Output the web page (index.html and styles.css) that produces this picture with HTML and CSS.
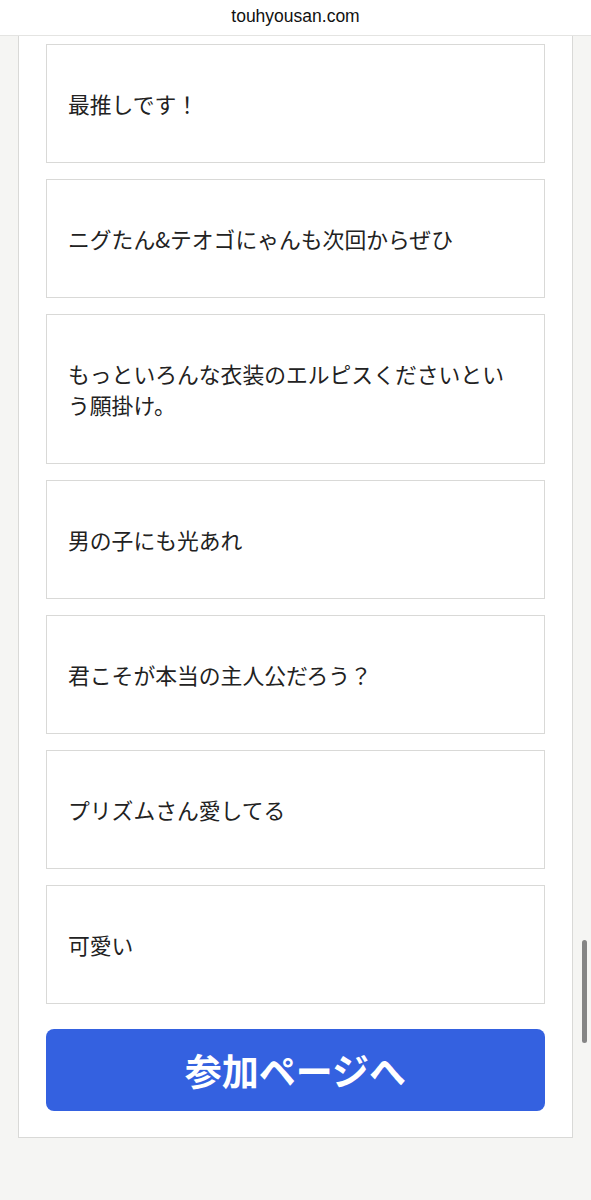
FILE: index.html
```html
<!DOCTYPE html>
<html lang="ja">
  <head>
    <meta charset="utf-8">
    <title>touhyousan.com</title>
    <link rel="stylesheet" href="styles.css">
  </head>
  <body>
    <header id="address-bar">touhyousan.com</header>
    <main id="page-main">
      <section id="comments">
        <div class="comment">最推しです！</div>
        <div class="comment">ニグたん&amp;テオゴにゃんも次回からぜひ</div>
        <div class="comment">もっといろんな衣装のエルピスくださいという願掛け。</div>
        <div class="comment">男の子にも光あれ</div>
        <div class="comment">君こそが本当の主人公だろう？</div>
        <div class="comment">プリズムさん愛してる</div>
        <div class="comment">可愛い</div>
      </section>
      <a id="join-button" href="#">参加ページへ</a>
    </main>
    <div id="scroll-thumb"></div>
  </body>
</html>
```

FILE: styles.css
```css
:root {
  --bg: #f5f5f3;
  --line: #d9d9d7;
  --text: #222222;
  --blue: #3461e0;
}
body {
  margin: 0;
  width: 591px;
  height: 1200px;
  font-family: "Noto Sans CJK JP", "Liberation Sans", sans-serif;
  color: var(--text);
  background-color: var(--bg);
  position: relative;
  overflow: hidden;
}
#address-bar {
  height: 35px;
  line-height: 32px;
  text-align: center;
  font-family: "Liberation Sans", Arial, sans-serif;
  font-size: 17.5px;
  color: #111;
  background-color: #fff;
  border-bottom: 1px solid #e4e4e2;
}
#page-main {
  margin: 0 18px;
  padding: 8px 27px 26px;
  background-color: #fff;
  border: 1px solid var(--line);
  border-top: 0;
}
#comments {
  display: flex;
  flex-direction: column;
  gap: 16px;
}
.comment {
  padding: 43px 30px 43px 21px;
  font-size: 21.8px;
  line-height: 31px;
  border: 1px solid var(--line);
}
#join-button {
  display: block;
  margin-top: 25px;
  height: 82px;
  line-height: 82px;
  text-align: center;
  font-size: 37px;
  font-weight: bold;
  color: #fff;
  text-decoration: none;
  background-color: var(--blue);
  border-radius: 8px;
}
#scroll-thumb {
  position: absolute;
  left: 582px;
  top: 940px;
  width: 5px;
  height: 103px;
  border-radius: 3px;
  background-color: #858585;
}
```
